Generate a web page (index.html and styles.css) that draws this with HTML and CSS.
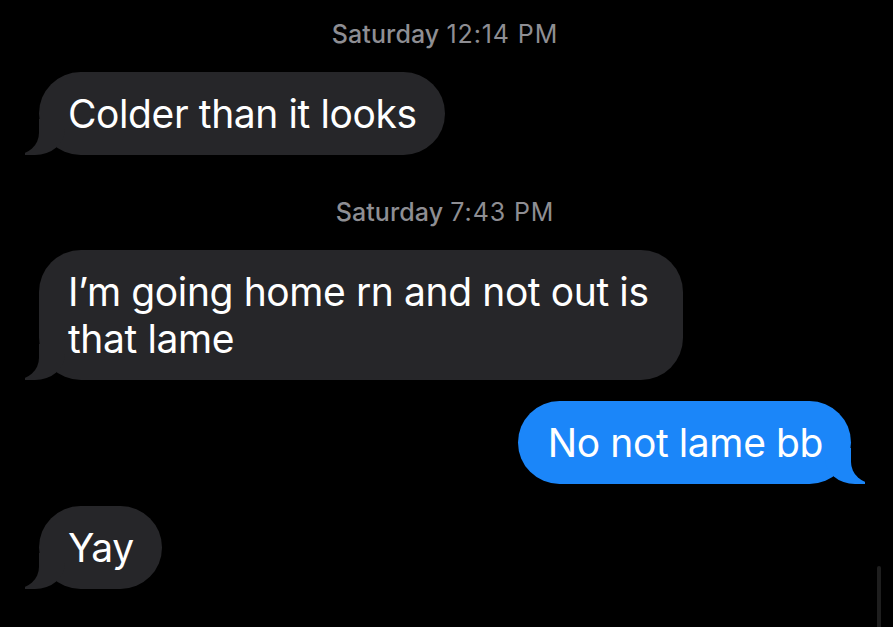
FILE: index.html
```html
<!DOCTYPE html>
<html lang="en">
<head>
<meta charset="utf-8">
<title>Messages</title>
<link rel="stylesheet" href="styles.css">
</head>
<body>
<main class="thread">
  <div class="stamp"><b>Saturday</b> <span class="time">12:14 PM</span></div>
  <div class="row them"><div class="bubble gray">Colder than it looks</div></div>
  <div class="stamp second"><b>Saturday</b> <span class="time">7:43 PM</span></div>
  <div class="row them"><div class="bubble gray">I’m going home rn and not out is that lame</div></div>
  <div class="row me"><div class="bubble blue">No not lame bb</div></div>
  <div class="row them"><div class="bubble gray">Yay</div></div>
  <div class="scroll-indicator"></div>
</main>
</body>
</html>
```
FILE: styles.css
```css
html, body {
  margin: 0;
  padding: 0;
  background: #000;
  height: 100%;
  overflow: hidden;
}
.thread {
  position: relative;
  height: 627px;
  box-sizing: border-box;
  padding: 20px 42px 0 39px;
  display: flex;
  flex-direction: column;
  font-family: Inter, "Noto Sans", "Liberation Sans", sans-serif;
}
.stamp {
  text-align: center;
  color: #8e8e93;
  font-size: 25px;
  line-height: 28px;
  height: 28px;
  margin-bottom: 24px;
  letter-spacing: 0.1px;
}
.stamp b { font-weight: 500; }
.stamp .time { letter-spacing: 0.9px; }
.stamp.second { margin-top: 43px; }
.row { display: flex; }
.row.them { justify-content: flex-start; }
.row.me { justify-content: flex-end; margin-top: 21px; }
.row.me + .row { margin-top: 22px; }
.bubble {
  position: relative;
  z-index: 0;
  box-sizing: border-box;
  color: #fff;
  font-size: 39px;
  line-height: 47px;
  padding: 18px 28px 18px 29px;
  border-radius: 42px;
  letter-spacing: -0.4px;
  max-width: 644px;
}
.gray { background: #262629; }
.blue { background: #1b86f9; padding-left: 30px; padding-right: 28px; }
.bubble::before,
.bubble::after {
  content: "";
  position: absolute;
  bottom: 0;
  z-index: -1;
}
.bubble.gray::before {
  left: -14px;
  width: 40px;
  height: 36px;
  background: #262629;
  border-bottom-right-radius: 30px 26px;
}
.bubble.gray::after {
  left: -50px;
  width: 50px;
  height: 38px;
  background: #000;
  border-bottom-right-radius: 24px 22px;
}
.bubble.blue::before {
  right: -14px;
  width: 40px;
  height: 36px;
  background: #1b86f9;
  border-bottom-left-radius: 30px 26px;
}
.bubble.blue::after {
  right: -50px;
  width: 50px;
  height: 38px;
  background: #000;
  border-bottom-left-radius: 24px 22px;
}
.scroll-indicator {
  position: absolute;
  left: 877px;
  top: 566px;
  width: 4px;
  height: 70px;
  border-radius: 2px;
  background: #1e1e1e;
}
```
